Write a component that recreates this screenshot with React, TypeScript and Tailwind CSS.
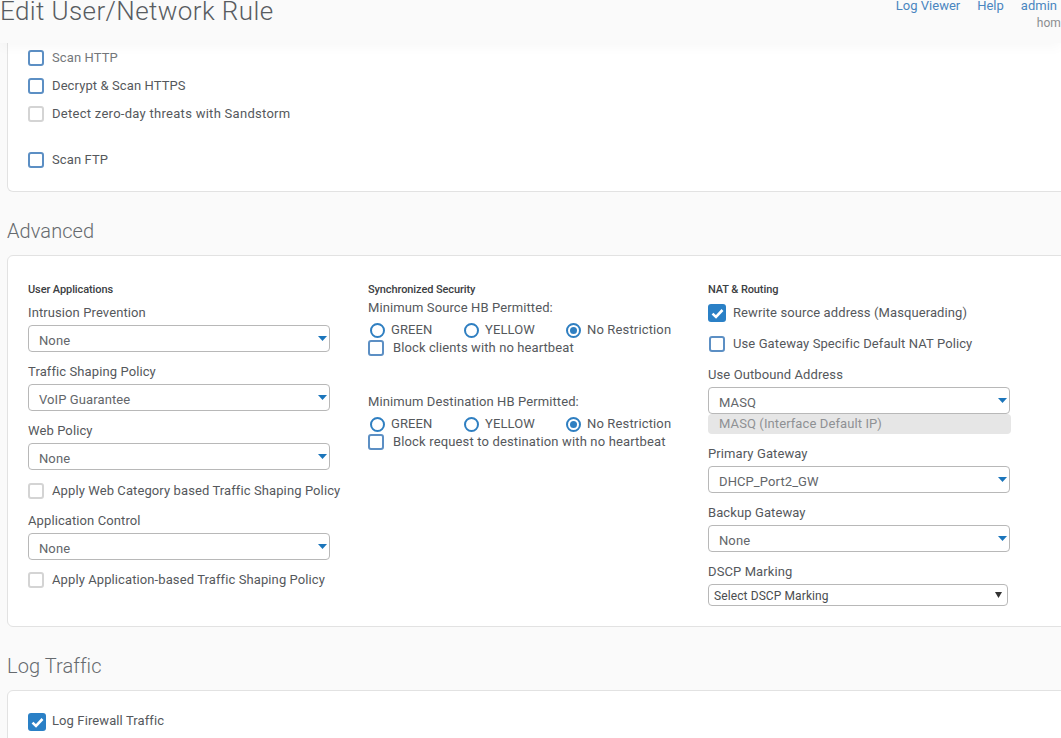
import React from "react";

function Box({ muted = false }: { muted?: boolean }) {
  return (
    <span
      className={`block w-4 h-4 shrink-0 rounded-[3px] border-2 bg-white ${muted ? "border-[#d4d4d4]" : "border-[#5c8fc4]"}`}
    />
  );
}

function Checked() {
  return (
    <span className="flex items-center justify-center shrink-0 rounded-[3px] bg-[#2a80c6] w-[18px] h-[18px]">
      <svg width="13" height="11" viewBox="0 0 13 11" fill="none">
        <path d="M1.5 5.6 5 9 11.5 2" stroke="#fff" strokeWidth="2.6" />
      </svg>
    </span>
  );
}

function Row({ label, muted = false, className = "", gap = "gap-2" }: { label: string; muted?: boolean; className?: string; gap?: string }) {
  return (
    <div className={`flex items-center ${gap} ${className}`}>
      <Box muted={muted} />
      <span className="whitespace-nowrap">{label}</span>
    </div>
  );
}

function Select({ value, className = "" }: { value: string; className?: string }) {
  return (
    <div className={`relative w-[302px] h-[27px] rounded-[4px] border border-[#b8b8b8] bg-white pl-[10px] pt-[7px] leading-[16px] text-[#63666a] ${className}`}>
      {value}
      <svg className="absolute right-[2px] top-[10px]" width="9" height="5" viewBox="0 0 9 5">
        <path d="M0 0H9L4.5 5Z" fill="#1b75bb" />
      </svg>
    </div>
  );
}

function Radio({ on = false }: { on?: boolean }) {
  return (
    <span className="flex items-center justify-center w-[15px] h-[15px] shrink-0 rounded-full border-2 border-[#2f7fc1] bg-white">
      {on && <span className="block w-[7px] h-[7px] rounded-full bg-[#2f7fc1]" />}
    </span>
  );
}

function Radios({ className = "" }: { className?: string }) {
  return (
    <div className={`flex items-center h-4 pl-[2px] ${className}`}>
      <div className="flex items-center gap-[6px] w-[94px]"><Radio /><span>GREEN</span></div>
      <div className="flex items-center gap-[6px] w-[102px]"><Radio /><span>YELLOW</span></div>
      <div className="flex items-center gap-[6px]"><Radio on /><span className="whitespace-nowrap tracking-[0.15px]">No Restriction</span></div>
    </div>
  );
}

function Label({ children, className = "" }: { children: React.ReactNode; className?: string }) {
  return <div className={`h-4 leading-[18px] whitespace-nowrap ${className}`}>{children}</div>;
}

function ColTitle({ children }: { children: React.ReactNode }) {
  return <div className="h-[14px] leading-[16px] text-[11px] font-medium tracking-[-0.1px] text-[#3c4043] whitespace-nowrap">{children}</div>;
}

function Heading({ children }: { children: React.ReactNode }) {
  return (
    <h2 className="h-[63px] pt-[27px] pl-[7px] text-[20px] leading-6 font-light tracking-[0.08px] text-[#666a6e]">{children}</h2>
  );
}

export default function App() {
  return (
    <div
      className="h-[738px] w-[1061px] overflow-hidden bg-[#fafafa] text-[13px] tracking-[0.1px] text-[#55585c] flex flex-col"
      style={{ fontFamily: "Roboto, 'Open Sans', sans-serif" }}
    >
      <header className="relative z-10 h-[43px] shrink-0 bg-[#fafafa] shadow-[0_4px_12px_rgba(0,0,0,0.03)] overflow-hidden flex justify-between">
        <h1 className="-mt-[4px] text-[26px] leading-[30px] font-light tracking-[0.4px] text-[#585c61] whitespace-nowrap">Edit User/Network Rule</h1>
        <div className="flex flex-col items-end pr-[4px] -mt-[2px]">
          <nav className="flex gap-[17px] h-[16px] leading-4 text-[#4a86c0] tracking-[0px]">
            <span>Log Viewer</span>
            <span>Help</span>
            <span>admin</span>
          </nav>
          <div className="-mr-[4px] mt-[1px] h-4 leading-4 text-[12px] text-[#8b8d90]">hom</div>
        </div>
      </header>

      <main className="pl-[7px]">
        <section className="h-[149px] -mr-2 rounded-bl-[6px] border border-t-0 border-[#e2e2e2] bg-white pl-5 pt-px">
          <Row label="Scan HTTP" className="h-7 text-[#74777b]" />
          <Row label="Decrypt & Scan HTTPS" className="h-7" />
          <Row label="Detect zero-day threats with Sandstorm" muted className="h-7 tracking-[0.28px]" />
          <Row label="Scan FTP" className="h-7 mt-[18px]" />
        </section>

        <div className="-ml-[7px]"><Heading>Advanced</Heading></div>

        <section className="h-[372px] -mr-2 rounded-l-[6px] border border-[#e2e2e2] bg-white pl-5 pt-[26px] grid grid-cols-[340px_340px_1fr]">
          <div>
            <ColTitle>User Applications</ColTitle>
            <Label className="mt-2">Intrusion Prevention</Label>
            <Select value="None" className="mt-[5px]" />
            <Label className="mt-[11px]">Traffic Shaping Policy</Label>
            <Select value="VoIP Guarantee" className="mt-[5px]" />
            <Label className="mt-[11px]">Web Policy</Label>
            <Select value="None" className="mt-[5px]" />
            <Row label="Apply Web Category based Traffic Shaping Policy" muted className="h-5 mt-[11px]" />
            <Label className="mt-[11px]">Application Control</Label>
            <Select value="None" className="mt-[5px]" />
            <Row label="Apply Application-based Traffic Shaping Policy" muted className="h-5 mt-[10px]" />
          </div>

          <div>
            <ColTitle>Synchronized Security</ColTitle>
            <Label className="mt-[3px]">Minimum Source HB Permitted:</Label>
            <Radios className="mt-[7px]" />
            <Row label="Block clients with no heartbeat" className="h-4 mt-[2px]" gap="gap-[9px]" />
            <Label className="mt-[37px]">Minimum Destination HB Permitted:</Label>
            <Radios className="mt-[7px]" />
            <Row label="Block request to destination with no heartbeat" className="h-4 mt-[2px] tracking-[0.15px]" gap="gap-[9px]" />
          </div>

          <div>
            <ColTitle>NAT &amp; Routing</ColTitle>
            <div className="flex items-center gap-[7px] h-[18px] mt-2">
              <Checked />
              <span className="whitespace-nowrap">Rewrite source address (Masquerading)</span>
            </div>
            <div className="flex items-center gap-2 h-4 mt-[14px] pl-[1px]">
              <Box />
              <span className="whitespace-nowrap">Use Gateway Specific Default NAT Policy</span>
            </div>
            <Label className="mt-[14px]">Use Outbound Address</Label>
            <Select value="MASQ" className="mt-[5px]" />
            <div className="w-[303px] h-5 rounded-[4px] bg-[#e6e6e6] pl-[11px] leading-[19px] text-[#8f9194] whitespace-nowrap">MASQ (Interface Default IP)</div>
            <Label className="mt-[11px]">Primary Gateway</Label>
            <Select value="DHCP_Port2_GW" className="mt-[5px]" />
            <Label className="mt-[11px]">Backup Gateway</Label>
            <Select value="None" className="mt-[5px]" />
            <Label className="mt-[11px]">DSCP Marking</Label>
            <div className="relative mt-[5px] w-[300px] h-[22px] rounded-[4px] border border-[#b8b8b8] bg-white pl-[5px] leading-[22px] text-[12px] text-[#4a4d50] whitespace-nowrap">
              Select DSCP Marking
              <svg className="absolute right-[5px] top-[7px]" width="7" height="6" viewBox="0 0 7 6">
                <path d="M0 0H7L3.5 6Z" fill="#333" />
              </svg>
            </div>
          </div>
        </section>

        <div className="-ml-[7px]"><Heading>Log Traffic</Heading></div>

        <section className="h-[60px] -mr-2 rounded-tl-[6px] border border-[#e2e2e2] bg-white pl-5 pt-[22px]">
          <div className="flex items-center gap-[6px] h-[18px]">
            <Checked />
            <span className="whitespace-nowrap -mt-[2px]">Log Firewall Traffic</span>
          </div>
        </section>
      </main>
    </div>
  );
}
